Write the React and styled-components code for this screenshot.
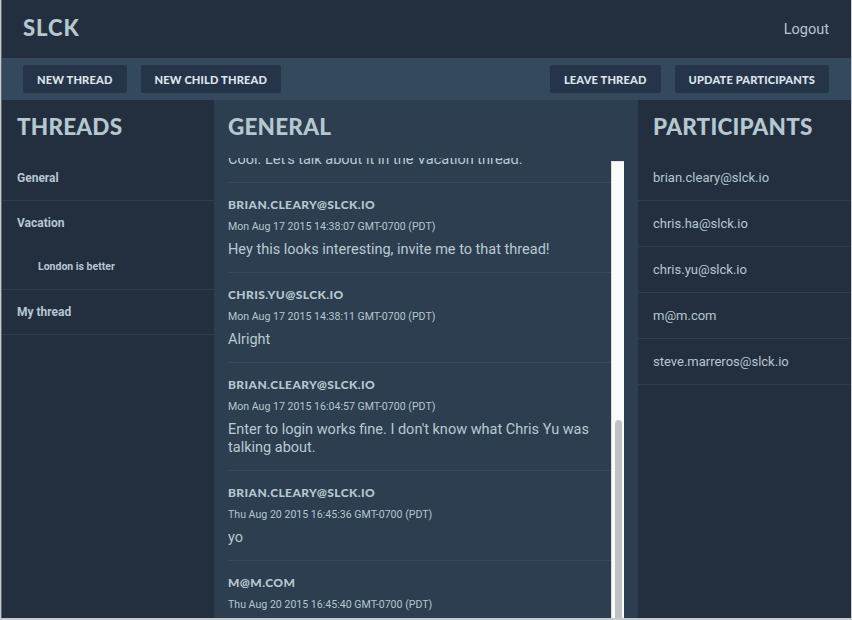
import React from 'react';
import styled, { createGlobalStyle } from 'styled-components';

const GlobalStyle = createGlobalStyle`
  html, body {
    margin: 0;
    padding: 0;
    height: 100%;
    overflow: hidden;
    background: #c6cbd0;
  }
  body {
    font-family: Roboto, 'Liberation Sans', sans-serif;
  }
`;

const AppShell = styled.div`
  margin: 0 1px 0 1px;
  height: 618px;
  display: flex;
  flex-direction: column;
  overflow: hidden;
  background: #232f3f;
  border-left: 1px solid #5f6873;
`;

const Header = styled.header`
  height: 58px;
  flex: none;
  display: flex;
  align-items: center;
  justify-content: space-between;
  padding: 0 22px 0 21px;
  background: #232f3f;
`;

const Logo = styled.div`
  font-family: Lato, 'Liberation Sans', sans-serif;
  font-weight: 900;
  font-size: 22px;
  letter-spacing: 1px;
  color: #b5c7cf;
  margin-top: -3px;
`;

const Logout = styled.a`
  font-size: 14.5px;
  color: #b9c6cd;
  margin-top: 1px;
`;

const Toolbar = styled.div`
  height: 42px;
  flex: none;
  display: flex;
  align-items: center;
  gap: 14px;
  padding: 0 22px 0 21px;
  background: #34495e;
`;

const Spacer = styled.div`
  flex: 1;
`;

const ToolButton = styled.button`
  height: 28px;
  padding: 0 14px;
  border: none;
  border-radius: 2px;
  background: #26344a;
  color: #dde5ea;
  font-family: Lato, 'Liberation Sans', sans-serif;
  font-weight: 900;
  font-size: 11.1px;
  letter-spacing: 0.15px;
  text-transform: uppercase;
`;

const Columns = styled.div`
  flex: 1;
  display: grid;
  grid-template-columns: 212px 424px 1fr;
  min-height: 0;
`;

const Column = styled.section`
  display: flex;
  flex-direction: column;
  min-height: 0;
  background: ${p => (p.$main ? '#2c3e50' : '#232f3f')};
  padding-left: ${p => (p.$main ? '14px' : '0')};
`;

const ColumnTitle = styled.h2`
  margin: 0;
  padding: 12px 0 0 ${p => p.$indent || '15px'};
  height: 42px;
  flex: none;
  box-sizing: border-box;
  font-family: Lato, 'Liberation Sans', sans-serif;
  font-weight: 900;
  font-size: 22.5px;
  line-height: 30px;
  letter-spacing: 0.2px;
  color: #b5c7cf;
`;

const ThreadList = styled.ul`
  list-style: none;
  margin: 14px 0 0;
  padding: 0;
`;

const ThreadItem = styled.li`
  padding: 14px 0 14px ${p => (p.$child ? '36px' : '15px')};
  line-height: 16px;
  font-weight: 700;
  font-size: ${p => (p.$child ? '10.5px' : '12px')};
  color: #b5c7cf;
  border-bottom: ${p => (p.$last ? '1px solid #2e3e51' : 'none')};
`;

const FeedRow = styled.div`
  margin: 16px 14px 0 0;
  height: 492px;
  flex: none;
  display: flex;
`;

const Feed = styled.div`
  flex: 1;
  display: flex;
  flex-direction: column;
  justify-content: flex-end;
  overflow: hidden;
`;

const ScrollTrack = styled.div`
  width: 12px;
  margin-top: 3px;
  display: flex;
  flex-direction: column;
  align-items: center;
  background: #fafafa;
  border-left: 1px solid #dcdcdc;
  border-top: 1px solid #e4e4e4;
`;

const ScrollThumb = styled.div`
  margin-top: ${p => p.$offset}px;
  width: 7px;
  flex: 1;
  border-radius: 4px;
  background: #c2c2c2;
`;

const Message = styled.div`
  flex: none;
  padding: 14px 0 13px;
  border-bottom: 1px solid #36495d;
  &:last-child {
    border-bottom: none;
  }
`;

const Author = styled.div`
  font-family: Lato, 'Liberation Sans', sans-serif;
  font-weight: 900;
  font-size: 12px;
  line-height: 16px;
  letter-spacing: 0.4px;
  color: #b5c7cf;
  text-transform: uppercase;
`;

const Stamp = styled.div`
  margin-top: 6px;
  font-size: 10.6px;
  line-height: 16px;
  color: #b5c7cf;
`;

const Body = styled.div`
  margin-top: 6px;
  font-size: 14.5px;
  line-height: 18px;
  color: #b9cad2;
  padding-right: 20px;
`;

const ParticipantList = styled.ul`
  list-style: none;
  margin: 13px 0 0;
  padding: 0;
`;

const Participant = styled.li`
  padding: 15px 0 15px 15px;
  line-height: 15px;
  font-size: 13px;
  color: #b5c7cf;
  border-bottom: 1px solid #2e3e51;
`;

const messages = [
  { author: 'chris.ha@slck.io', stamp: 'Mon Aug 17 2015 14:30:51 GMT-0700 (PDT)', text: "Cool. Let's talk about it in the Vacation thread." },
  { author: 'brian.cleary@slck.io', stamp: 'Mon Aug 17 2015 14:38:07 GMT-0700 (PDT)', text: 'Hey this looks interesting, invite me to that thread!' },
  { author: 'chris.yu@slck.io', stamp: 'Mon Aug 17 2015 14:38:11 GMT-0700 (PDT)', text: 'Alright' },
  { author: 'brian.cleary@slck.io', stamp: 'Mon Aug 17 2015 16:04:57 GMT-0700 (PDT)', text: "Enter to login works fine. I don't know what Chris Yu was talking about." },
  { author: 'brian.cleary@slck.io', stamp: 'Thu Aug 20 2015 16:45:36 GMT-0700 (PDT)', text: 'yo' },
  { author: 'm@m.com', stamp: 'Thu Aug 20 2015 16:45:40 GMT-0700 (PDT)', text: 'hi' },
];

const participants = [
  'brian.cleary@slck.io',
  'chris.ha@slck.io',
  'chris.yu@slck.io',
  'm@m.com',
  'steve.marreros@slck.io',
];

export default function App() {
  return (
    <>
      <GlobalStyle />
      <AppShell>
        <Header>
          <Logo>SLCK</Logo>
          <Logout>Logout</Logout>
        </Header>
        <Toolbar>
          <ToolButton>New Thread</ToolButton>
          <ToolButton>New Child Thread</ToolButton>
          <Spacer />
          <ToolButton>Leave Thread</ToolButton>
          <ToolButton>Update Participants</ToolButton>
        </Toolbar>
        <Columns>
          <Column>
            <ColumnTitle>THREADS</ColumnTitle>
            <ThreadList>
              <ThreadItem $last>General</ThreadItem>
              <ThreadItem>Vacation</ThreadItem>
              <ThreadItem $child $last>London is better</ThreadItem>
              <ThreadItem $last>My thread</ThreadItem>
            </ThreadList>
          </Column>
          <Column $main>
            <ColumnTitle $indent="0">GENERAL</ColumnTitle>
            <FeedRow>
              <Feed>
                {messages.map((m, i) => (
                  <Message key={i}>
                    <Author>{m.author}</Author>
                    <Stamp>{m.stamp}</Stamp>
                    <Body>{m.text}</Body>
                  </Message>
                ))}
              </Feed>
              <ScrollTrack>
                <ScrollThumb $offset={258} />
              </ScrollTrack>
            </FeedRow>
          </Column>
          <Column>
            <ColumnTitle $indent="15px">PARTICIPANTS</ColumnTitle>
            <ParticipantList>
              {participants.map(p => (
                <Participant key={p}>{p}</Participant>
              ))}
            </ParticipantList>
          </Column>
        </Columns>
      </AppShell>
    </>
  );
}
